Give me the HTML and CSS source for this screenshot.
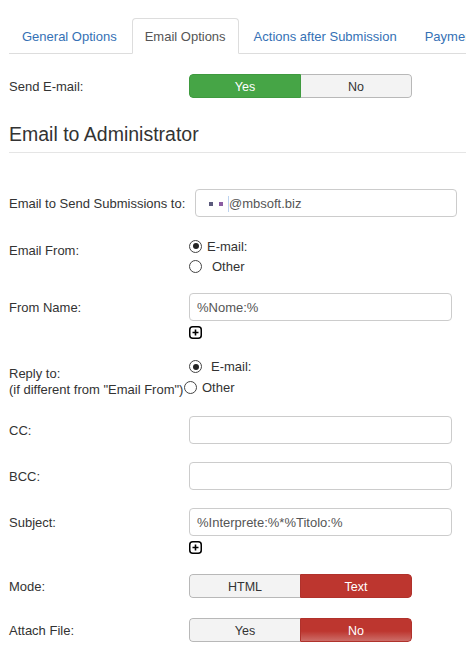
FILE: index.html
```html
<!DOCTYPE html>
<html>
<head>
<meta charset="utf-8">
<link rel="stylesheet" href="styles.css">
</head>
<body>
<div class="page">
  <ul class="tabs">
    <li><a class="tab">General Options</a></li>
    <li><a class="tab active">Email Options</a></li>
    <li><a class="tab">Actions after Submission</a></li>
    <li><a class="tab">Payment Options</a></li>
  </ul>

  <div class="row row-send">
    <label class="lbl">Send E-mail:</label>
    <div class="toggle">
      <span class="tbtn on-green">Yes</span>
      <span class="tbtn off">No</span>
    </div>
  </div>

  <h2 class="heading">Email to Administrator</h2>

  <div class="row row-top">
    <label class="lbl lbl-wide">Email to Send Submissions to:</label>
    <div class="input input-email"><span class="sq sq1"></span><span class="sq sq2"></span><span class="mail">@mbsoft.biz</span></div>
  </div>

  <div class="row row-from">
    <label class="lbl lbl-radio">Email From:</label>
    <div class="radios">
      <div class="radio-line"><span class="radio checked"></span><span class="rtext">E-mail:</span></div>
      <div class="radio-line"><span class="radio"></span><span class="rtext rtext-gap">Other</span></div>
    </div>
  </div>

  <div class="row row-name">
    <label class="lbl">From Name:</label>
    <div class="field">
      <div class="input">%Nome:%</div>
      <svg class="plus" width="13" height="13" viewBox="0 0 13 13"><rect x="0.75" y="0.75" width="11.5" height="11.5" rx="3" fill="#fff" stroke="#000" stroke-width="1.5"/><path d="M6.5 3.5v6M3.5 6.5h6" stroke="#000" stroke-width="1.6"/></svg>
    </div>
  </div>

  <div class="row row-reply">
    <label class="lbl lbl-reply">Reply to:<br>(if different from "Email From")</label>
    <div class="radios radios-reply">
      <div class="radio-line"><span class="radio checked"></span><span class="rtext rtext-gap2">E-mail:</span></div>
      <div class="radio-line shift"><span class="radio"></span><span class="rtext">Other</span></div>
    </div>
  </div>

  <div class="row row-cc">
    <label class="lbl">CC:</label>
    <div class="input"></div>
  </div>

  <div class="row row-input">
    <label class="lbl">BCC:</label>
    <div class="input"></div>
  </div>

  <div class="row row-input">
    <label class="lbl">Subject:</label>
    <div class="field">
      <div class="input">%Interprete:%*%Titolo:%</div>
      <svg class="plus" width="13" height="13" viewBox="0 0 13 13"><rect x="0.75" y="0.75" width="11.5" height="11.5" rx="3" fill="#fff" stroke="#000" stroke-width="1.5"/><path d="M6.5 3.5v6M3.5 6.5h6" stroke="#000" stroke-width="1.6"/></svg>
    </div>
  </div>

  <div class="row row-toggle">
    <label class="lbl">Mode:</label>
    <div class="toggle">
      <span class="tbtn off">HTML</span>
      <span class="tbtn on-red">Text</span>
    </div>
  </div>

  <div class="row row-toggle">
    <label class="lbl">Attach File:</label>
    <div class="toggle">
      <span class="tbtn off">Yes</span>
      <span class="tbtn on-red hover">No</span>
    </div>
  </div>
</div>
</body>
</html>
```

FILE: styles.css
```css
html, body {
  margin: 0;
  padding: 0;
  background: #fff;
  overflow: hidden;
}
body {
  font-family: "Liberation Sans", Arial, sans-serif;
  font-size: 13px;
  color: #333;
}
.page {
  padding: 18px 0 0 9px;
  width: 520px;
}
.tabs {
  display: flex;
  list-style: none;
  margin: 0;
  padding: 0;
  border-bottom: 1px solid #ddd;
  white-space: nowrap;
}
.tabs li {
  margin-bottom: -1px;
}
.tab {
  display: block;
  padding: 9px 12px 7px;
  line-height: 18px;
  margin-right: 2px;
  border: 1px solid transparent;
  border-radius: 4px 4px 0 0;
  color: #3571b5;
}
.tab.active {
  border-color: #ddd #ddd transparent;
  background: #fff;
  color: #555;
}
.row {
  display: flex;
  align-items: flex-start;
}
.lbl {
  flex: 0 0 180px;
  line-height: 18px;
  padding-top: 6px;
  white-space: nowrap;
}
.lbl-wide {
  flex-basis: 186px;
}
.row-send {
  margin-top: 20px;
  align-items: center;
}
.row-send .lbl, .row-toggle .lbl {
  padding-top: 2px;
}
.row-toggle {
  align-items: center;
  margin-top: 20px;
}
.toggle {
  display: flex;
  width: 223px;
  height: 24px;
  border-radius: 4px;
  overflow: hidden;
  font-size: 12.5px;
}
.tbtn {
  flex: 1 1 0;
  box-sizing: border-box;
  text-align: center;
  line-height: 22px;
  padding-top: 1px;
  border: 1px solid #b8b8b8;
}
.on-green {
  background: #46a546;
  border-color: #3f9a3f;
  color: #fff;
  border-radius: 4px 0 0 4px;
}
.on-red {
  background: #bd362f;
  border-color: #b0322c;
  color: #fff;
  border-radius: 0 4px 4px 0;
}
.on-red.hover {
  background: linear-gradient(to bottom, #bd362f 0%, #bd362f 55%, #cc6d68 100%);
}
.off {
  background: #f3f3f3;
  color: #333;
}
.toggle .off:first-child {
  border-radius: 4px 0 0 4px;
  border-right: none;
}
.toggle .off:last-child {
  border-radius: 0 4px 4px 0;
  border-left: none;
}
.heading {
  margin: 23px 0 0;
  font-size: 19.5px;
  line-height: 24px;
  font-weight: normal;
  padding: 1px 0 6px;
  border-bottom: 1px solid #e5e5e5;
  color: #333;
}
.row-top {
  margin-top: 36px;
}
.input {
  box-sizing: border-box;
  width: 263px;
  height: 28px;
  border: 1px solid #ccc;
  border-radius: 4px;
  padding: 1px 7px 0;
  line-height: 26px;
  color: #555;
  display: flex;
  align-items: center;
}
.input-email {
  width: 262px;
  padding-left: 13px;
}
.sq {
  display: inline-block;
  width: 4px;
  height: 4px;
  margin-right: 6px;
}
.sq1 { background: #5b5a7c; }
.sq2 { background: #8b5da3; margin-right: 5px; }
.mail {
  border-left: 1px solid #bcd3ef;
  line-height: 16px;
}
.row-from {
  margin-top: 19px;
}
.lbl-radio {
  padding-top: 6px;
}
.radio-line {
  display: flex;
  align-items: center;
  height: 20px;
}
.radio {
  box-sizing: border-box;
  width: 13px;
  height: 13px;
  border: 1px solid #444;
  border-radius: 50%;
  background: #fff;
  position: relative;
}
.radio.checked::after {
  content: "";
  position: absolute;
  left: 2.5px;
  top: 2.5px;
  width: 6px;
  height: 6px;
  border-radius: 50%;
  background: #222;
}
.rtext {
  margin-left: 5px;
  line-height: 18px;
  padding-top: 1px;
}
.rtext-gap { margin-left: 10px; }
.rtext-gap2 { margin-left: 9px; }
.row-name {
  margin-top: 17px;
}
.field {
  display: flex;
  flex-direction: column;
  align-items: flex-start;
}
.plus {
  display: block;
  margin-top: 5px;
}
.row-reply {
  margin-top: 17px;
}
.lbl-reply {
  line-height: 16px;
  padding-top: 10px;
}
.radios-reply .radio-line {
  height: 21px;
}
.radio-line.shift {
  margin-left: -5px;
}
.row-cc {
  margin-top: 18px;
}
.row-input {
  margin-top: 18px;
}
```
